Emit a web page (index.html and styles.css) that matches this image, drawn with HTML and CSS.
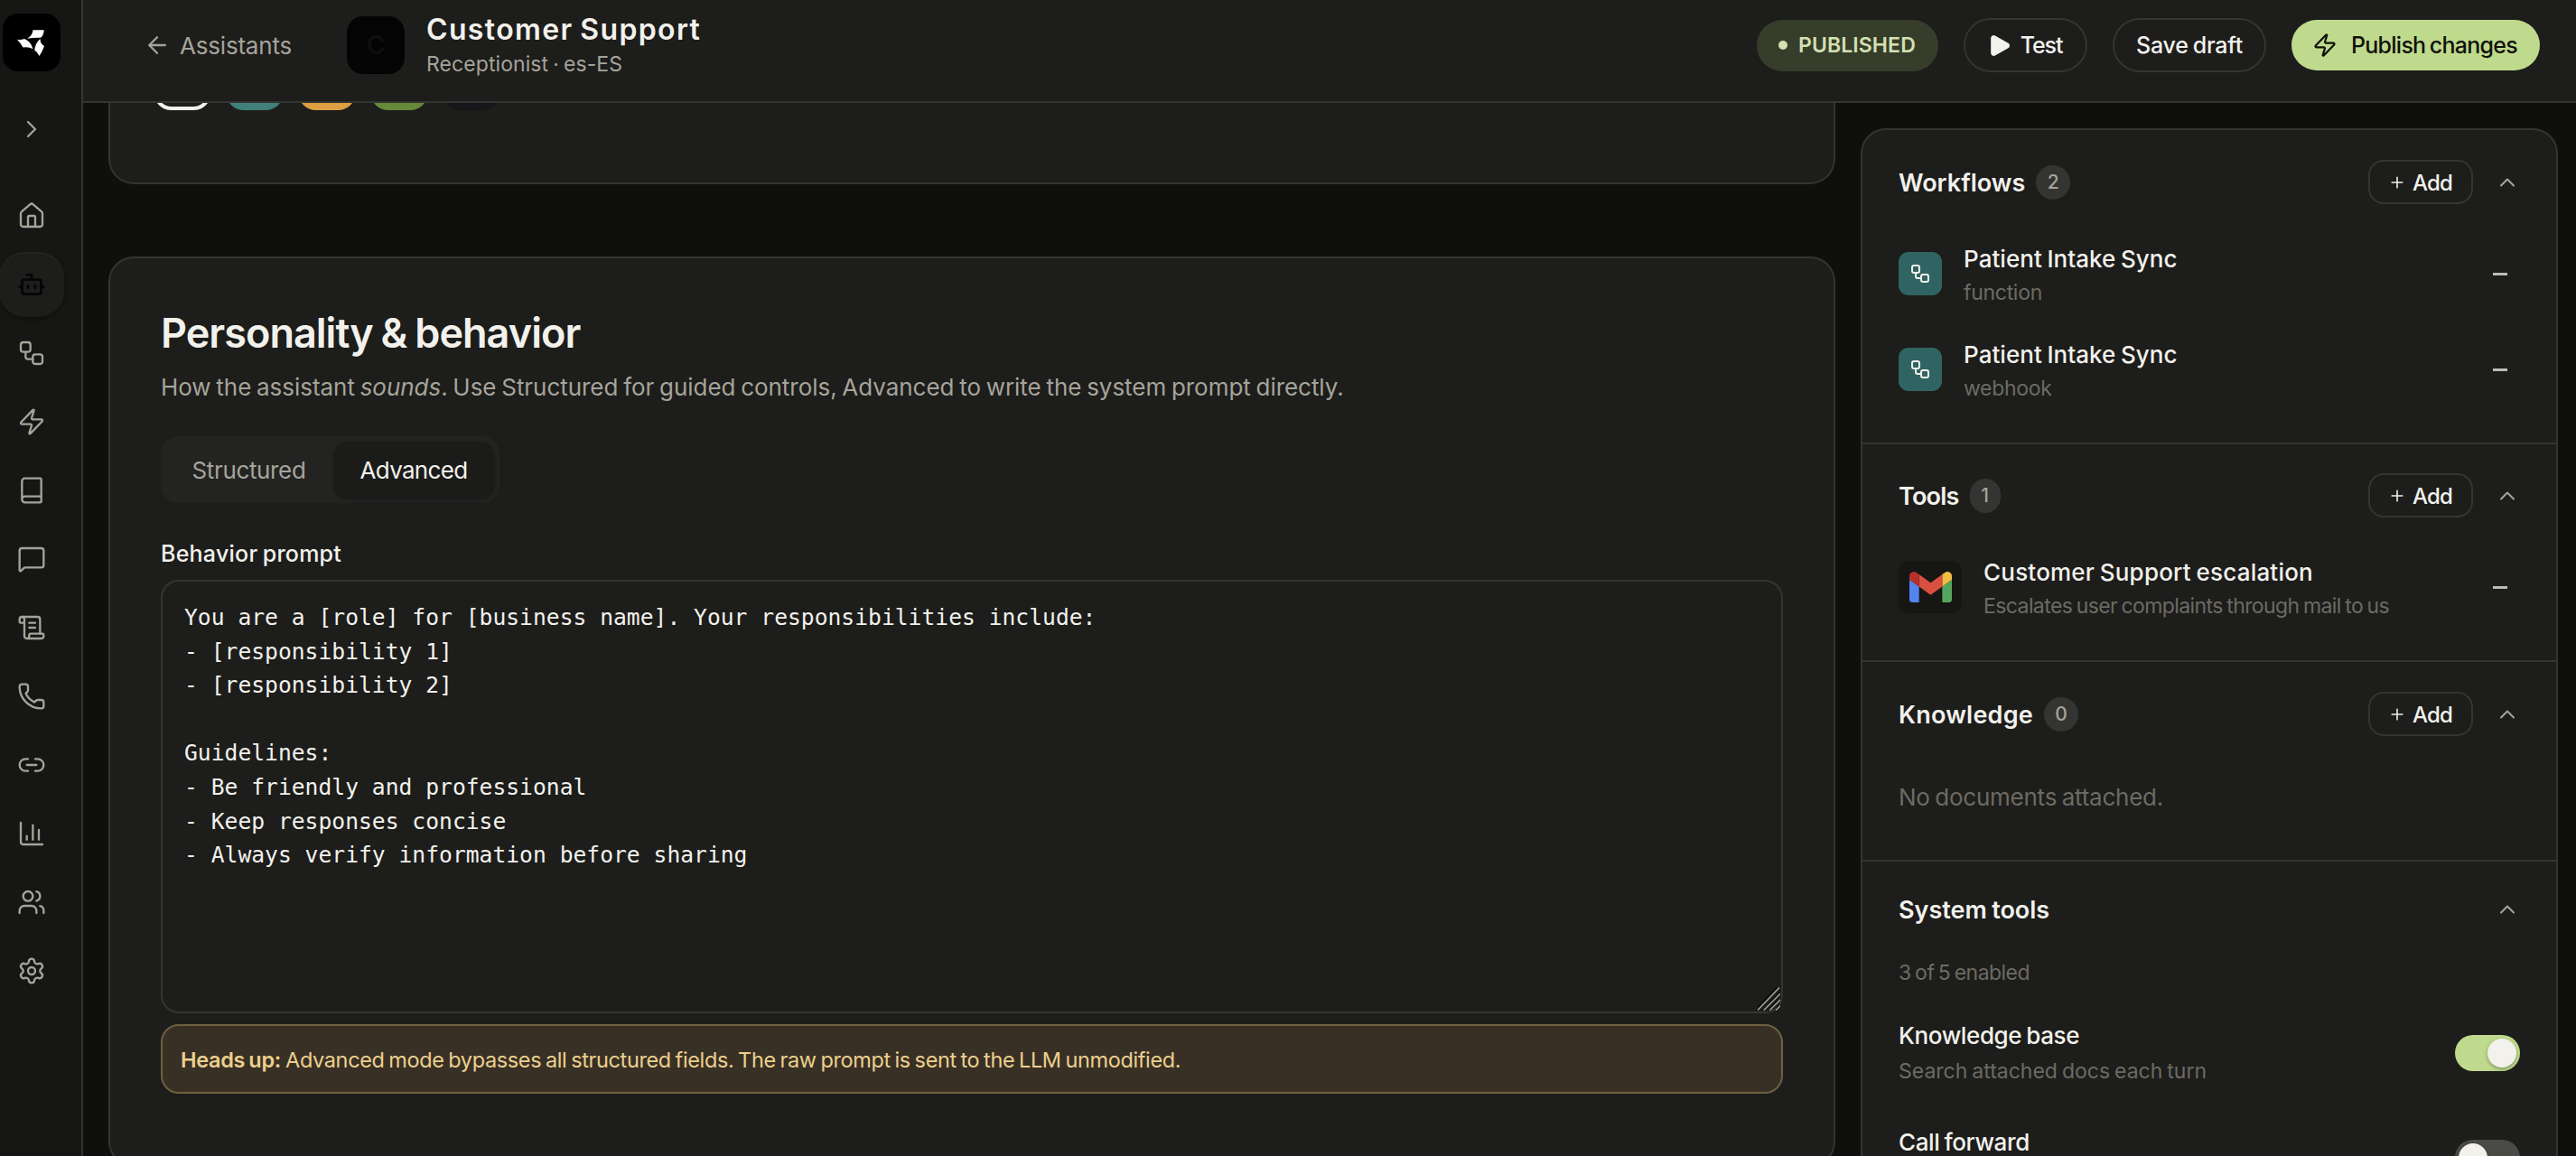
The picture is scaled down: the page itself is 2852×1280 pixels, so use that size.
FILE: index.html
```html
<!DOCTYPE html>
<html lang="en">
<head>
<meta charset="utf-8">
<title>Customer Support</title>
<link rel="stylesheet" href="styles.css">
</head>
<body>
<svg class="defs" width="0" height="0">
  <symbol id="chev-up" viewBox="0 0 24 24"><path d="m18 15-6-6-6 6"/></symbol>
  <symbol id="flow" viewBox="0 0 24 24"><rect width="8" height="8" x="3" y="3" rx="2"/><path d="M7 11v4a2 2 0 0 0 2 2h4"/><rect width="8" height="8" x="13" y="13" rx="2"/></symbol>
  <symbol id="zap" viewBox="0 0 24 24"><path d="M4 14a1 1 0 0 1-.78-1.63l9.9-10.2a.5.5 0 0 1 .86.46l-1.92 6.02A1 1 0 0 0 13 10h7a1 1 0 0 1 .78 1.63l-9.9 10.2a.5.5 0 0 1-.86-.46l1.92-6.02A1 1 0 0 0 11 14z"/></symbol>
  <symbol id="plus" viewBox="0 0 24 24"><path d="M5 12h14M12 5v14"/></symbol>
</svg>
<div class="app">
  <nav class="rail">
    <div class="logo"><svg viewBox="0 0 64 64"><path d="M33.5 18.3H45.7Q45.5 24 42 26.8Q35 26.2 27 27.8Q33 24.500 33.500 18.300Z"/><path d="M16 28.8Q20.500 29.500 24 28Q31 30.500 33.500 39.300Q28.500 36.200 22.500 37.600Q20 33 16 28.800Z"/><path d="M41.500 28Q41.500 33.500 46 36Q43.800 42.500 40.500 47Q38.500 42.500 35.200 40.500Q36 33 41.500 28Z"/></svg></div>
    <div class="expand"><svg class="ico" viewBox="0 0 24 24"><path d="m9 18 6-6-6-6"/></svg></div>
    <div class="nav">
      <a class="item"><svg class="ico" viewBox="0 0 24 24"><path d="M15 21v-8a1 1 0 0 0-1-1h-4a1 1 0 0 0-1 1v8"/><path d="M3 10a2 2 0 0 1 .709-1.528l7-6a2 2 0 0 1 2.582 0l7 6A2 2 0 0 1 21 10v9a2 2 0 0 1-2 2H5a2 2 0 0 1-2-2z"/></svg></a>
      <a class="item active"><svg class="ico" viewBox="0 0 24 24"><path d="M12 8V4H8"/><rect width="16" height="12" x="4" y="8" rx="2"/><path d="M2 14h2M20 14h2M15 13v2M9 13v2"/></svg></a>
      <a class="item"><svg class="ico"><use href="#flow"/></svg></a>
      <a class="item"><svg class="ico"><use href="#zap"/></svg></a>
      <a class="item"><svg class="ico" viewBox="0 0 24 24"><path d="M4 19.500v-15A2.500 2.500 0 0 1 6.500 2H19a1 1 0 0 1 1 1v18a1 1 0 0 1-1 1H6.500a1 1 0 0 1 0-5H20"/></svg></a>
      <a class="item"><svg class="ico" viewBox="0 0 24 24"><path d="M22 17a2 2 0 0 1-2 2H6.828a2 2 0 0 0-1.414.586l-2.202 2.202A.71.71 0 0 1 2 21.286V5a2 2 0 0 1 2-2h16a2 2 0 0 1 2 2z"/></svg></a>
      <a class="item"><svg class="ico" viewBox="0 0 24 24"><path d="M15 12h-5M15 8h-5M19 17V5a2 2 0 0 0-2-2H4"/><path d="M8 21h12a2 2 0 0 0 2-2v-1a1 1 0 0 0-1-1H11a1 1 0 0 0-1 1v1a2 2 0 1 1-4 0V5a2 2 0 1 0-4 0v2a1 1 0 0 0 1 1h3"/></svg></a>
      <a class="item"><svg class="ico" viewBox="0 0 24 24"><path d="M13.832 16.568a1 1 0 0 0 1.213-.303l.355-.465A2 2 0 0 1 17 15h3a2 2 0 0 1 2 2v3a2 2 0 0 1-2 2A18 18 0 0 1 2 4a2 2 0 0 1 2-2h3a2 2 0 0 1 2 2v3a2 2 0 0 1-.8 1.600l-.468.351a1 1 0 0 0-.292 1.233 14 14 0 0 0 6.392 6.384"/></svg></a>
      <a class="item"><svg class="ico" viewBox="0 0 24 24"><path d="M9 17H7A5 5 0 0 1 7 7h2M15 7h2a5 5 0 1 1 0 10h-2M8 12h8"/></svg></a>
      <a class="item"><svg class="ico" viewBox="0 0 24 24"><path d="M3 3v16a2 2 0 0 0 2 2h16M18 17V9M13 17V5M8 17v-3"/></svg></a>
      <a class="item"><svg class="ico" viewBox="0 0 24 24"><path d="M16 21v-2a4 4 0 0 0-4-4H6a4 4 0 0 0-4 4v2M16 3.128a4 4 0 0 1 0 7.744M22 21v-2a4 4 0 0 0-3-3.870"/><circle cx="9" cy="7" r="4"/></svg></a>
      <a class="item"><svg class="ico" viewBox="0 0 24 24"><path d="M9.671 4.136a2.340 2.340 0 0 1 4.659 0 2.340 2.340 0 0 0 3.319 1.915 2.340 2.340 0 0 1 2.330 4.033 2.340 2.340 0 0 0 0 3.831 2.340 2.340 0 0 1-2.330 4.033 2.340 2.340 0 0 0-3.319 1.915 2.340 2.340 0 0 1-4.659 0 2.340 2.340 0 0 0-3.320-1.915 2.340 2.340 0 0 1-2.330-4.033 2.340 2.340 0 0 0 0-3.831A2.340 2.340 0 0 1 6.350 6.051a2.340 2.340 0 0 0 3.319-1.915"/><circle cx="12" cy="12" r="3"/></svg></a>
    </div>
  </nav>

  <div class="main">
    <header class="top">
      <a class="back"><svg class="ico" viewBox="0 0 24 24"><path d="m12 19-7-7 7-7M19 12H5"/></svg><span>Assistants</span></a>
      <div class="avatar">C</div>
      <div class="who"><div class="name">Customer Support</div><div class="role">Receptionist · es-ES</div></div>
      <div class="actions">
        <div class="pill"><i class="dot"></i>PUBLISHED</div>
        <button class="btn test"><svg viewBox="0 0 24 24"><path d="M4 4a3 3 0 0 1 4.500-2.600l14 8a3 3 0 0 1 0 5.200l-14 8A3 3 0 0 1 4 20z"/></svg><span>Test</span></button>
        <button class="btn save">Save draft</button>
        <button class="btn publish"><svg class="ico"><use href="#zap"/></svg><span>Publish changes</span></button>
      </div>
    </header>

    <div class="content">
      <section class="editor">
        <div class="card swatch-card">
          <div class="swatches"><i class="sw ring"></i><i class="sw teal"></i><i class="sw amber"></i><i class="sw green"></i><i class="sw ink"></i></div>
        </div>
        <div class="card behavior">
          <h2>Personality &amp; behavior</h2>
          <p class="desc">How the assistant <em>sounds</em>. Use Structured for guided controls, Advanced to write the system prompt directly.</p>
          <div class="tabs"><span class="tab structured">Structured</span><span class="tab on">Advanced</span></div>
          <div class="label">Behavior prompt</div>
          <div class="prompt">You are a [role] for [business name]. Your responsibilities include:
- [responsibility 1]
- [responsibility 2]

Guidelines:
- Be friendly and professional
- Keep responses concise
- Always verify information before sharing<svg class="grip" viewBox="0 0 26 26"><path class="shade" d="M-1 24 23-1M7 25 25 6M14 25 25 13M21 25l4-5"/><path d="M0 26 25 0M7 26 26 7M14 26 26 14M21 26l5-5"/></svg></div>
          <div class="alert"><b>Heads up:</b> <span>Advanced mode bypasses all structured fields. The raw prompt is sent to the LLM unmodified.</span></div>
        </div>
      </section>

      <aside class="side">
        <section class="group workflows">
          <div class="head"><h3>Workflows</h3><span class="count">2</span><button class="add"><svg class="ico"><use href="#plus"/></svg>Add</button><svg class="ico chev"><use href="#chev-up"/></svg></div>
          <div class="row"><span class="tile"><svg class="ico"><use href="#flow"/></svg></span><div class="txt"><div class="t1">Patient Intake Sync</div><div class="t2 short">function</div></div><i class="minus"></i></div>
          <div class="row"><span class="tile"><svg class="ico"><use href="#flow"/></svg></span><div class="txt"><div class="t1">Patient Intake Sync</div><div class="t2 short">webhook</div></div><i class="minus"></i></div>
        </section>
        <section class="group tools">
          <div class="head"><h3 class="tight">Tools</h3><span class="count one">1</span><button class="add"><svg class="ico"><use href="#plus"/></svg>Add</button><svg class="ico chev"><use href="#chev-up"/></svg></div>
          <div class="row"><span class="mail"><svg viewBox="52 42 88 66" preserveAspectRatio="none"><path fill="#5484ee" d="M58 108h14V74L52 59v43c0 3.320 2.690 6 6 6"/><path fill="#55a65c" d="M120 108h14c3.320 0 6-2.690 6-6V59l-20 15"/><path fill="#f3bd42" d="M120 48v26l20-15v-8c0-7.420-8.470-11.650-14.400-7.200"/><path fill="#d8503f" d="M72 74V48l24 18 24-18v26L96 92"/><path fill="#b8302a" d="M52 51v8l20 15V48l-5.600-4.200c-5.940-4.450-14.400-.220-14.400 7.200"/></svg></span><div class="txt"><div class="t1 wide">Customer Support escalation</div><div class="t2 dense">Escalates user complaints through mail to us</div></div><i class="minus"></i></div>
        </section>
        <section class="group knowledge">
          <div class="head"><h3 class="loose">Knowledge</h3><span class="count">0</span><button class="add"><svg class="ico"><use href="#plus"/></svg>Add</button><svg class="ico chev"><use href="#chev-up"/></svg></div>
          <p class="empty">No documents attached.</p>
        </section>
        <section class="group system">
          <div class="head"><h3>System tools</h3><svg class="ico chev"><use href="#chev-up"/></svg></div>
          <p class="enabled">3 of 5 enabled</p>
          <div class="opt"><div class="txt"><div class="t1 snug">Knowledge base</div><div class="t2">Search attached docs each turn</div></div><span class="switch on"><i></i></span></div>
          <div class="opt"><div class="txt"><div class="t1 snug">Call forward</div></div><span class="switch"><i></i></span></div>
        </section>
      </aside>
    </div>
  </div>
</div>
</body>
</html>
```
FILE: styles.css
```css
* { box-sizing: border-box; }
html, body { margin: 0; height: 100%; }
body {
  background: #0f0f0d;
  color: #f2f1ec;
  font-family: Inter, "Liberation Sans", sans-serif;
  font-size: 26px;
  word-spacing: -1.5px;
  overflow: hidden;
}
h2, h3, p { margin: 0; font-weight: inherit; }
button { font: inherit; color: inherit; word-spacing: inherit; background: none; border: 0; padding: 0; }
i { font-style: normal; display: block; }
svg { display: block; flex: none; }
.defs { position: absolute; }
.ico { fill: none; stroke: currentColor; stroke-width: 1.75; stroke-linecap: round; stroke-linejoin: round; }

.app { display: flex; height: 1280px; }

/* Navigation rail */
.rail {
  flex: none; width: 92px; height: 1280px; padding: 15px 20px 0 0;
  background: #161614; border-right: 2px solid #343432; color: #a5a49a;
  display: flex; flex-direction: column; align-items: center;
}
.logo { width: 64px; height: 64px; border-radius: 17px; background: #000; flex: none; }
.logo svg { width: 64px; height: 64px; fill: #fff; }
.expand { height: 64px; margin: 32px 0 28px; display: flex; align-items: center; flex: none; }
.expand .ico { width: 32px; height: 32px; }
.nav { display: flex; flex-direction: column; align-items: center; gap: 4px; }
.item { width: 72px; height: 72px; border-radius: 28px; display: flex; align-items: center; justify-content: center; }
.item .ico { width: 32px; height: 32px; }
.item.active { background: #1d1d1b; color: #050505; box-shadow: inset 0 2px 0 #232321, 0 2px 4px rgba(0,0,0,.4); }
.item.active .ico { stroke-width: 2.100; }

.main { flex: 1; display: flex; flex-direction: column; min-width: 0; }

/* Header */
.top {
  flex: none; height: 114px; padding: 0 40px 12px 67px;
  background: #1d1d1b; border-bottom: 2px solid #343432;
  display: flex; align-items: center;
}
.back { width: 225px; display: flex; align-items: center; gap: 10px; color: #a5a49a; letter-spacing: -.2px; }
.back .ico { width: 30px; height: 30px; stroke-width: 1.900; }
.avatar { width: 64px; height: 64px; border-radius: 18px; background: #040404; color: #0f0f0e; font-weight: 600; font-size: 28px; display: flex; align-items: center; justify-content: center; }
.who { margin: 1px 0 0 24px; }
.name { font-size: 32px; font-weight: 600; line-height: 40px; letter-spacing: 1.350px; }
.role { font-size: 23px; line-height: 36px; color: #a5a49a; letter-spacing: .080px; }
.actions { margin-left: auto; display: flex; align-items: center; gap: 28px; font-size: 25px; font-weight: 500; }
.pill { width: 201px; height: 57px; border-radius: 29px; background: #373d2b; color: #d4e0b0; font-size: 23px; font-weight: 600; letter-spacing: .1px; display: flex; align-items: center; padding-left: 24px; }
.dot { width: 10px; height: 10px; border-radius: 50%; background: #d4e0b0; margin-right: 12px; }
.btn { display: flex; align-items: center; justify-content: center; height: 60px; border: 2px solid #343432; border-radius: 30px; white-space: nowrap; }
.test { width: 137px; letter-spacing: -1.100px; gap: 12px; }
.test svg { width: 25px; height: 25px; fill: #f2f1ec; margin-left: -2px; }
.save { width: 170px; letter-spacing: -.2px; }
.publish { width: 275px; height: 56px; border: 0; background: #bfda8c; color: #10110c; letter-spacing: -.740px; gap: 15px; padding-right: 2px; }
.publish .ico { width: 28px; height: 28px; stroke-width: 1.900; }

/* Page body */
.content { flex: 1; min-height: 0; overflow: hidden; display: flex; gap: 28px; padding: 0 20px 0 28px; }
.editor { width: 1912px; flex: none; }
.card { background: #1d1d1b; border: 2px solid #343432; border-radius: 28px; }
.swatch-card { height: 90px; border-top: 0; border-radius: 0 0 28px 28px; padding-left: 48px; }
.swatches { height: 8px; overflow: hidden; display: flex; align-items: flex-end; gap: 16px; }
.sw { width: 64px; height: 64px; border-radius: 20px; flex: none; }
.ring { border: 4px solid #f2f1ec; }
.teal { background: #417f7b; }
.amber { background: #dea042; }
.green { background: #678a38; }
.ink { background: #17171b; }

.behavior { margin-top: 80px; height: 1008px; padding: 54px 56px 0; }
.behavior h2 { font-size: 45px; font-weight: 600; line-height: 58px; letter-spacing: -.980px; }
.desc { margin-top: 11px; line-height: 40px; color: #a5a49a; letter-spacing: -.040px; white-space: nowrap; }
.tabs { margin-top: 34px; width: 375px; height: 74px; padding: 6px; border-radius: 20px; background: #232322; display: flex; }
.tab { flex: none; width: 186px; height: 62px; display: flex; align-items: center; justify-content: center; border-radius: 15px; color: #a5a49a; letter-spacing: -.350px; padding: 1px 3px 0 0; }
.tab.on { width: 177px; background: #1b1b19; color: #f2f1ec; letter-spacing: -.670px; padding-right: 1px; box-shadow: 0 2px 4px rgba(0,0,0,.3); }
.label { margin-top: 36px; height: 40px; line-height: 40px; font-size: 25px; font-weight: 500; letter-spacing: .240px; }
.prompt {
  position: relative; margin-top: 9px; height: 480px; padding: 21px 24px 0 24px;
  border: 2px solid #343432; border-radius: 20px;
  font: 24.660px/37.600px "DejaVu Sans Mono", monospace; word-spacing: 0; white-space: pre;
}
.grip { position: absolute; right: 1px; bottom: 1px; width: 25px; height: 26px; fill: none; stroke: #aaa9a5; stroke-width: 1.500; }
.grip .shade { stroke: #0c0c0b; }
.alert {
  margin-top: 12px; height: 77px; border: 2px solid #6f6040; border-radius: 20px; background: #393025;
  color: #ecd08e; font-size: 23.500px; line-height: 75px; padding-left: 20px; white-space: nowrap;
}
.alert b { font-weight: 600; letter-spacing: -.3px; }
.alert span { letter-spacing: -.370px; }

/* Attachments panel */
.side { width: 772px; flex: none; height: 1180px; margin-top: 28px; background: #1d1d1b; border: 2px solid #343432; border-radius: 28px 28px 0 0; }
.group { padding: 33px 40px 0; border-bottom: 2px solid #343432; }
.head { display: flex; align-items: center; height: 49px; }
.head h3 { font-size: 27px; font-weight: 600; white-space: nowrap; padding-top: 2px; }
.head .tight { letter-spacing: -.800px; }
.head .loose { letter-spacing: .230px; }
.count { margin-left: 12px; width: 38px; height: 38px; border-radius: 19px; background: #343432; color: #a5a49a; font-size: 21px; font-weight: 500; display: flex; align-items: center; justify-content: center; }
.count.one { width: 34px; }
.add { margin-left: auto; width: 116px; height: 49px; border: 2px solid #343432; border-radius: 17px; font-size: 24px; font-weight: 500; letter-spacing: -.830px; display: flex; align-items: center; gap: 7px; padding: 1px 0 0 20px; }
.add .ico { width: 20px; height: 20px; stroke-width: 1.900; }
.chev { width: 28px; height: 28px; margin-left: 24px; color: #a5a49a; }
.system .chev { margin-left: auto; }
.row { display: flex; align-items: center; height: 106px; }
.txt { flex: 1; white-space: nowrap; padding-top: 4px; }
.tile { width: 48px; height: 48px; border-radius: 11px; background: #306462; display: flex; align-items: center; justify-content: center; margin-right: 24px; }
.tile .ico { width: 24px; height: 24px; stroke-width: 2; }
.t1 { font-weight: 500; line-height: 38px; letter-spacing: .060px; }
.t1.wide { letter-spacing: .210px; }
.t1.snug { letter-spacing: -.380px; }
.t2 { font-size: 23px; line-height: 36px; color: #6c6b63; }
.t2.short { letter-spacing: -.3px; }
.t2.dense { letter-spacing: -.590px; }
.minus { width: 16px; height: 3px; background: #bdbcb8; margin-right: 14px; }
.workflows { height: 348px; }
.workflows .head { margin-bottom: 24px; }
.tools { height: 241px; padding-top: 32px; }
.tools .row { margin-top: 24px; }
.mail { width: 70px; height: 58px; border-radius: 12px; background: #161614; display: flex; align-items: center; justify-content: center; margin-right: 24px; }
.mail svg { width: 47px; height: 34px; }
.knowledge { height: 221px; }
.empty { margin-top: 48px; line-height: 40px; color: #6c6b63; letter-spacing: -.240px; }
.system { border: 0; padding-top: 28px; }
.enabled { margin-top: 26px; line-height: 40px; font-size: 23px; color: #6c6b63; letter-spacing: -.530px; }
.opt { display: flex; align-items: center; height: 116px; }
.enabled + .opt { margin-top: 11px; }
.opt .txt { padding-top: 2px; }
.opt:last-child .txt { padding-bottom: 36px; }
.opt .t2 { line-height: 40px; }
.switch { width: 72px; height: 40px; border-radius: 20px; background: #4a4a46; padding: 4px; display: flex; }
.switch i { width: 32px; height: 32px; border-radius: 50%; background: #f2f1ec; box-shadow: 0 2px 4px rgba(0,0,0,.3); }
.switch.on { background: #bfda8c; justify-content: flex-end; }
```
